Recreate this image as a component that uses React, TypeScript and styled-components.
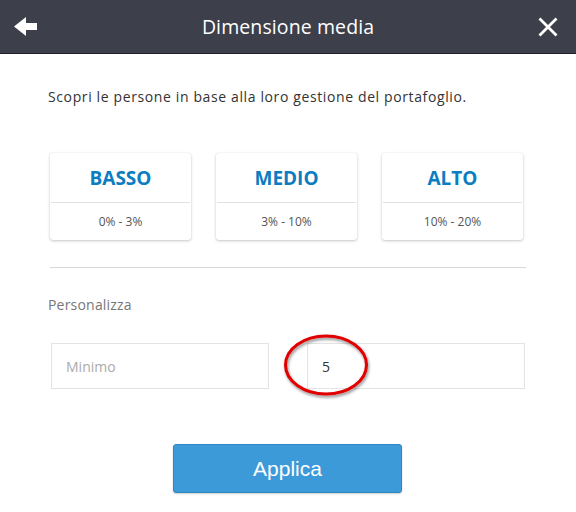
import React from "react";
import styled, { createGlobalStyle } from "styled-components";

const Global = createGlobalStyle`
  html, body { margin: 0; padding: 0; background: #fff; }
  body { font-family: "Open Sans", "Noto Sans", sans-serif; }
  * { box-sizing: border-box; }
`;

const Page = styled.div`
  width: 576px;
  height: 512px;
  background: #fff;
  overflow: hidden;
`;

const Header = styled.header`
  height: 54px;
  background: #3d3f4b;
  border-bottom: 1px solid #1e1f25;
  display: grid;
  grid-template-columns: 50px 1fr 50px;
  align-items: center;
`;

const IconButton = styled.div<{ $align: "left" | "right" }>`
  display: flex;
  justify-content: ${(p) => (p.$align === "left" ? "flex-start" : "flex-end")};
  padding: ${(p) => (p.$align === "left" ? "0 0 0 14px" : "0 18px 0 0")};
  height: 100%;
  align-items: center;
`;

const Title = styled.h1`
  margin: 0;
  text-align: center;
  color: #fff;
  font-family: "Open Sans", sans-serif;
  font-weight: 400;
  font-size: 19.5px;
  letter-spacing: 0.1px;
`;

const Body = styled.main`
  padding: 33px 50px 0 48px;
`;

const Intro = styled.p`
  margin: 0;
  font-size: 14px;
  letter-spacing: 0.62px;
  color: #333;
  line-height: 20px;
`;

const Cards = styled.div`
  margin-top: 46px;
  padding-left: 2px;
  display: grid;
  grid-template-columns: repeat(3, 141px);
  column-gap: 25px;
`;

const Card = styled.div`
  height: 87px;
  border-radius: 3px;
  background: #fff;
  box-shadow: 0 1px 3px rgba(0, 0, 0, 0.22), 0 0 1px rgba(0, 0, 0, 0.12);
  display: flex;
  flex-direction: column;
`;

const CardTitle = styled.div`
  height: 50px;
  display: flex;
  align-items: center;
  justify-content: center;
  font-family: "Open Sans", sans-serif;
  font-weight: 700;
  font-size: 19px;
  color: #0b7dc0;
  border-bottom: 1px solid #e2e2e2;
  margin: 0 1px;
  padding-top: 1px;
`;

const CardRange = styled.div`
  flex: 1;
  display: flex;
  align-items: center;
  justify-content: center;
  font-size: 12px;
  color: #555;
`;

const Divider = styled.hr`
  margin: 27px 0 0 2px;
  border: 0;
  border-top: 1px solid #d8d8d8;
  width: 476px;
`;

const Label = styled.div`
  margin-top: 27px;
  font-size: 14px;
  letter-spacing: 0.2px;
  color: #777;
  line-height: 20px;
`;

const Inputs = styled.div`
  margin-top: 28px;
  padding-left: 3px;
  display: grid;
  grid-template-columns: 218px 218px;
  column-gap: 38px;
`;

const InputWrap = styled.div`
  position: relative;
`;

const Field = styled.div<{ $placeholder?: boolean }>`
  height: 46px;
  border: 1px solid #e3e3e3;
  display: flex;
  align-items: center;
  padding-left: 14px;
  font-size: 14px;
  color: ${(p) => (p.$placeholder ? "#aaa" : "#333")};
`;

const Highlight = styled.svg`
  position: absolute;
  left: -26px;
  top: -12px;
  width: 92px;
  height: 68px;
  overflow: visible;
  pointer-events: none;
`;

const ButtonRow = styled.div`
  margin-top: 55px;
  display: flex;
  padding-left: 125px;
`;

const Button = styled.button`
  width: 229px;
  height: 49px;
  background: #3d9ad9;
  border: 1px solid #2f86c4;
  border-radius: 3px;
  color: #fff;
  font-family: "Liberation Sans", Arial, sans-serif;
  font-size: 21px;
  box-shadow: 0 1px 2px rgba(0, 0, 0, 0.2);
  cursor: pointer;
`;

export default function App() {
  return (
    <Page>
      <Global />
      <Header>
        <IconButton $align="left">
          <svg width="24" height="20" viewBox="0 0 24 20">
            <path d="M0 9.5 L12 0 L12 6 L23 6 L23 13 L12 13 L12 19 Z" fill="#fff" />
          </svg>
        </IconButton>
        <Title>Dimensione media</Title>
        <IconButton $align="right">
          <svg width="20" height="20" viewBox="0 0 20 20">
            <path d="M1.5 1.5 L18.5 18.5 M18.5 1.5 L1.5 18.5" stroke="#fff" strokeWidth="2.8" />
          </svg>
        </IconButton>
      </Header>
      <Body>
        <Intro>Scopri le persone in base alla loro gestione del portafoglio.</Intro>
        <Cards>
          {[
            ["BASSO", "0% - 3%"],
            ["MEDIO", "3% - 10%"],
            ["ALTO", "10% - 20%"],
          ].map(([t, r]) => (
            <Card key={t}>
              <CardTitle>{t}</CardTitle>
              <CardRange>{r}</CardRange>
            </Card>
          ))}
        </Cards>
        <Divider />
        <Label>Personalizza</Label>
        <Inputs>
          <InputWrap>
            <Field $placeholder>Minimo</Field>
          </InputWrap>
          <InputWrap>
            <Field>5</Field>
            <Highlight viewBox="0 0 92 68">
              <defs>
                <filter id="sh" x="-30%" y="-30%" width="160%" height="160%">
                  <feDropShadow dx="1" dy="2" stdDeviation="1.6" floodColor="#000" floodOpacity="0.45" />
                </filter>
              </defs>
              <ellipse
                cx="45"
                cy="34"
                rx="40.5"
                ry="29"
                fill="none"
                stroke="#e00000"
                strokeWidth="3"
                filter="url(#sh)"
              />
            </Highlight>
          </InputWrap>
        </Inputs>
        <ButtonRow>
          <Button>Applica</Button>
        </ButtonRow>
      </Body>
    </Page>
  );
}
